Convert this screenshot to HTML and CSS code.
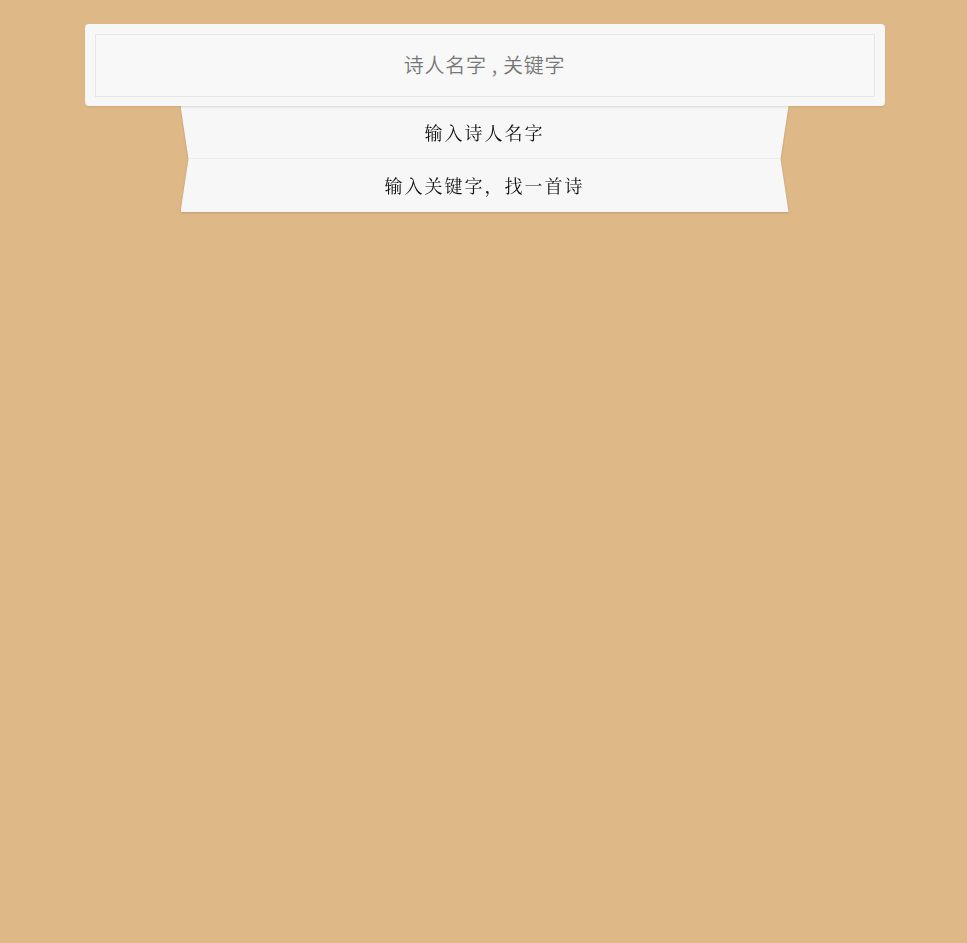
FILE: index.html
```html
<!DOCTYPE html>
<html lang="zh">
<head>
<meta charset="utf-8">
<title>诗</title>
<link rel="stylesheet" href="styles.css">
</head>
<body>
<div class="wrap">
  <div class="search-box">
    <div class="search-input">诗人名字 , 关键字</div>
  </div>
  <ul class="menu">
    <li class="item item-down">输入诗人名字</li>
    <li class="item item-up">输入关键字，找一首诗</li>
  </ul>
</div>
</body>
</html>
```
FILE: styles.css
```css
html, body {
  margin: 0;
  padding: 0;
  background: #deb887;
  height: 100%;
}
.wrap {
  width: 800px;
  margin: 24px auto 0;
  position: relative;
  left: 1px;
}
.search-box {
  background: #f7f7f7;
  border-radius: 4px;
  padding: 10px;
  box-shadow: 0 1px 2px rgba(0,0,0,0.08);
  position: relative;
  z-index: 2;
}
.search-input {
  height: 59px;
  padding-bottom: 2px;
  border: 1px solid #e6e6e6;
  background: #f8f8f8;
  display: flex;
  align-items: center;
  justify-content: center;
  font-family: "Noto Sans CJK SC", sans-serif;
  font-size: 20px;
  font-weight: 350;
  letter-spacing: 0.7px;
  color: #777;
  margin-bottom: -1px;
}
.menu {
  list-style: none;
  margin: 0 96px;
  padding: 0;
  filter: drop-shadow(0 1px 1px rgba(0,0,0,0.15));
}
.item {
  height: 51px;
  padding-bottom: 2px;
  display: flex;
  align-items: center;
  justify-content: center;
  background: #f7f7f7;
  font-family: "AR PL UMing CN", "Noto Serif CJK SC", serif;
  font-size: 18px;
  letter-spacing: 2px;
  color: #111;
}
.item-down {
  clip-path: polygon(0 0, 100% 0, calc(100% - 8px) 100%, 8px 100%);
  box-shadow: inset 0 -1px 0 #ececec;
  background: linear-gradient(#ececec 0, #f7f7f7 4px);
}
.item-up {
  clip-path: polygon(8px 0, calc(100% - 8px) 0, 100% 100%, 0 100%);
}
```
